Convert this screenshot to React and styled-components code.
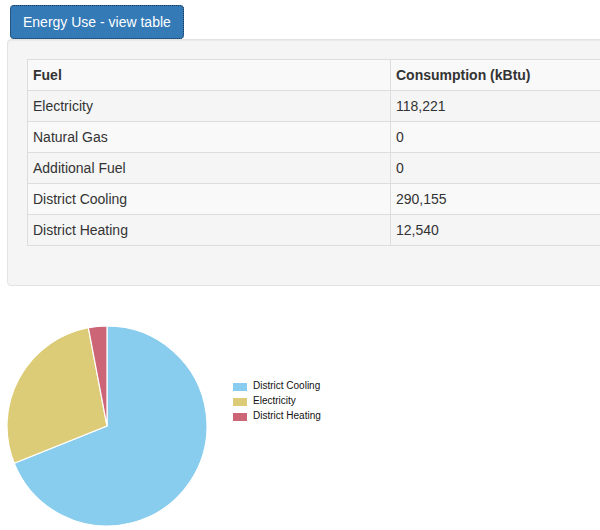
import React from "react";
import styled, { createGlobalStyle } from "styled-components";

const Global = createGlobalStyle`
  html, body { margin: 0; padding: 0; background: #fff; overflow: hidden; }
  body { font-family: "Liberation Sans", Arial, sans-serif; font-size: 14px; line-height: 1.42857; color: #333; }
  * { box-sizing: border-box; }
`;

const Page = styled.div`
  width: 600px;
  height: 530px;
  overflow: hidden;
  padding: 5px 0 0 7px;
`;

const ToggleButton = styled.button`
  display: block;
  margin-left: 3px;
  height: 34px;
  padding: 6px 12px;
  font-family: "Liberation Sans", Arial, sans-serif;
  font-size: 14px;
  line-height: 20px;
  color: #fff;
  background: #337ab7;
  border: 1px solid #2e6da4;
  border-radius: 4px;
  outline: 1px dotted #1a3d5c;
  outline-offset: -1px;
  cursor: pointer;
`;

const Well = styled.div`
  width: 800px;
  padding: 19px;
  margin-bottom: 20px;
  background: #f5f5f5;
  border: 1px solid #e3e3e3;
  border-radius: 4px;
  box-shadow: inset 0 1px 1px rgba(0, 0, 0, 0.05);
`;

const Table = styled.table`
  width: 100%;
  table-layout: fixed;
  border-collapse: collapse;
  border: 1px solid #ddd;
  margin-bottom: 20px;
`;

const Row = styled.tr`
  background: ${(p) => (p.$light ? "#f9f9f9" : "transparent")};
`;

const HeadCell = styled.th`
  text-align: left;
  font-weight: bold;
  padding: 5px;
  line-height: 20px;
  border: 1px solid #ddd;
`;

const Cell = styled.td`
  padding: 5px;
  line-height: 20px;
  border: 1px solid #ddd;
`;

const ChartRow = styled.div`
  display: flex;
  align-items: flex-start;
  padding-top: 19px;
  margin-left: -1px;
`;

const Legend = styled.div`
  display: flex;
  flex-direction: column;
  margin-top: 54px;
  margin-left: 25px;
`;

const LegendItem = styled.div`
  display: flex;
  align-items: center;
  height: 15px;
  font-family: "Liberation Sans", Arial, sans-serif;
  font-size: 10px;
  color: #111;
`;

const Swatch = styled.span`
  width: 14px;
  height: 8px;
  margin-right: 6px;
  background: ${(p) => p.$color};
`;

const rows = [
  ["Electricity", "118,221"],
  ["Natural Gas", "0"],
  ["Additional Fuel", "0"],
  ["District Cooling", "290,155"],
  ["District Heating", "12,540"],
];

const slices = [
  { label: "District Cooling", value: 290155, color: "#88ccee" },
  { label: "Electricity", value: 118221, color: "#ddcc77" },
  { label: "District Heating", value: 12540, color: "#cc6677" },
];

function Pie() {
  const total = slices.reduce((s, x) => s + x.value, 0);
  const cx = 101, cy = 101, r = 100;
  let a = -Math.PI / 2;
  const paths = slices.map((s) => {
    const da = (s.value / total) * Math.PI * 2;
    const a2 = a + da;
    const x1 = cx + r * Math.cos(a), y1 = cy + r * Math.sin(a);
    const x2 = cx + r * Math.cos(a2), y2 = cy + r * Math.sin(a2);
    const large = da > Math.PI ? 1 : 0;
    const d = `M${cx},${cy} L${x1},${y1} A${r},${r} 0 ${large} 1 ${x2},${y2} Z`;
    a = a2;
    return <path key={s.label} d={d} fill={s.color} stroke="#fff" strokeWidth="1.2" strokeLinejoin="round" />;
  });
  return (
    <svg width="202" height="202" viewBox="0 0 202 202">
      {paths}
    </svg>
  );
}

export default function App() {
  return (
    <Page>
      <Global />
      <ToggleButton>Energy Use - view table</ToggleButton>
      <Well>
        <Table>
          <colgroup>
            <col style={{ width: "363px" }} />
            <col />
          </colgroup>
          <thead>
            <Row $light>
              <HeadCell>Fuel</HeadCell>
              <HeadCell>Consumption (kBtu)</HeadCell>
            </Row>
          </thead>
          <tbody>
            {rows.map(([f, v], i) => (
              <Row key={f} $light={i % 2 === 1}>
                <Cell>{f}</Cell>
                <Cell>{v}</Cell>
              </Row>
            ))}
          </tbody>
        </Table>
      </Well>
      <ChartRow>
        <Pie />
        <Legend>
          {slices.map((s) => (
            <LegendItem key={s.label}>
              <Swatch $color={s.color} />
              {s.label}
            </LegendItem>
          ))}
        </Legend>
      </ChartRow>
    </Page>
  );
}
